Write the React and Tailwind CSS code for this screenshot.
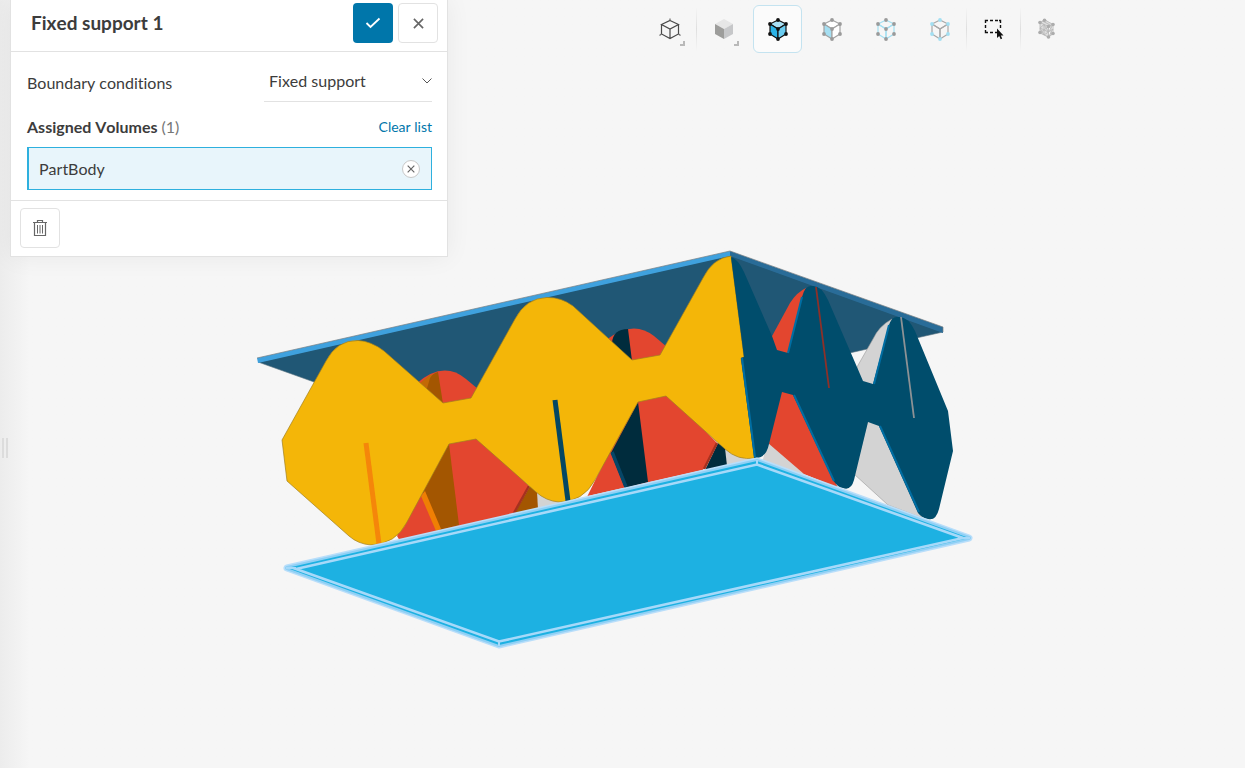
import { useState } from "react";

function Cube({ line, dot, top = "none", left = "none", right = "none", dots = true, center = true }) {
  const points = [
    [12, 3],
    [20, 7],
    [20, 17],
    [12, 22],
    [4, 17],
    [4, 7],
  ];
  return (
    <svg viewBox="0 0 24 24" className="size-6" aria-hidden="true">
      <g stroke={line} strokeWidth="1.2" strokeLinejoin="round">
        <path d="M12 3L20 7L12 12L4 7Z" fill={top} />
        <path d="M4 7L12 12V22L4 17Z" fill={left} />
        <path d="M20 7L12 12V22L20 17Z" fill={right} />
      </g>
      {dots && points.map(([x, y]) => <circle key={`${x}-${y}`} cx={x} cy={y} r="1.9" fill={dot} />)}
      {dots && center && <circle cx="12" cy="12" r="1.9" fill={dot} />}
    </svg>
  );
}

function WireCube() {
  return (
    <svg viewBox="0 0 24 24" className="size-6" fill="none" stroke="#4a4a4a" strokeWidth="1.2" aria-hidden="true">
      <path d="M12 3.500L20.500 7.500L12 12L3.500 7.500ZM3.500 7.500V17L12 21.500L20.500 17V7.500M12 12V21.500" />
      <path d="M12 3.500V1.500M3.500 17L1.500 18.500M20.500 17L22.500 18.500" stroke="#6a6a6a" />
    </svg>
  );
}

function SolidCube() {
  return (
    <svg viewBox="0 0 24 24" className="size-6" aria-hidden="true">
      <path d="M12 2L21 7L12 12L3 7Z" fill="#e6e6e6" />
      <path d="M3 7L12 12V22L3 17Z" fill="#9d9d9b" />
      <path d="M21 7L12 12V22L21 17Z" fill="#c6c7c9" />
    </svg>
  );
}

function BoxSelect() {
  return (
    <svg viewBox="0 0 24 24" className="size-6" aria-hidden="true">
      <path
        d="M3.5 6V3.5H6M8 3.5H11M13 3.5H16M17 3.5H18.5V6M18.5 8V11M3.5 8V11M3.5 13V15.5H6M8 15.5H11M13 15.5H15"
        fill="none"
        stroke="#111"
        strokeWidth="1.4"
      />
      <path d="M15 11.5V21L17.2 19L18.7 22.3L20.2 21.6L18.8 18.4H21.5Z" fill="#111" />
    </svg>
  );
}

function MeshCube() {
  return (
    <svg viewBox="0 0 24 24" className="size-6" aria-hidden="true">
      <path d="M4 5.5L9 3L17 7L12.500 9.5V21L4 16Z" fill="#dedede" />
      <path
        d="M4 5.5L9 3L17 7.5L12.500 9.5ZM4 5.5V16L12.500 20V9.5M12.500 20L17 16.5V7.5M4 11L12.500 15L17 12M8 7.5V18M4 16L12.500 9.5M4 11L8 7.5L12.500 15L8 18L4 11M15 8.5V18.5M12.500 15L17 7.5M12.500 20L17 12M6.500 4L15 8.5"
        fill="none"
        stroke="#b5b5b5"
        strokeWidth="0.8"
      />
      <g fill="#acacac">
        <circle cx="4" cy="5.5" r="1.8" />
        <circle cx="8.500" cy="3.300" r="1.8" />
        <circle cx="17" cy="7.5" r="1.8" />
        <circle cx="12.500" cy="9.5" r="1.8" />
        <circle cx="4" cy="15.500" r="1.8" />
        <circle cx="12.500" cy="20" r="1.8" />
        <circle cx="17" cy="16.500" r="1.8" />
      </g>
    </svg>
  );
}

const toolGroups = [
  [{ id: "wireframe", label: "View cube", icon: <WireCube />, menu: true }],
  [
    { id: "render", label: "Render mode", icon: <SolidCube />, menu: true },
    {
      id: "volumes",
      label: "Select volumes",
      icon: <Cube line="#111" dot="#111" top="#a9e0f5" left="#2cb3e6" right="#6accf0" />,
    },
    {
      id: "faces",
      label: "Select faces",
      icon: <Cube line="#a3a3a3" dot="#9a9a9a" left="#a5dff2" right="#fff" top="#fff" />,
    },
    { id: "nodes", label: "Select nodes", icon: <Cube line="#a2dff2" dot="#9a9a9a" /> },
    { id: "edges", label: "Select edges", icon: <Cube line="#a8a8a8" dot="#a2dff2" center={false} /> },
  ],
  [{ id: "box", label: "Box selection", icon: <BoxSelect /> }],
  [{ id: "mesh", label: "Mesh", icon: <MeshCube /> }],
];

function Toolbar() {
  const [active, setActive] = useState("volumes");

  return (
    <div role="toolbar" aria-label="Viewer" className="flex h-12 items-center">
      {toolGroups.map((group, index) => (
        <div key={index} className="flex h-full items-center">
          {index > 0 && <span className="mx-0.5 h-11 w-px bg-linear-to-b from-transparent via-[#dfdfdf] to-transparent" />}
          <div className="flex h-full gap-[5px]">
            {group.map((tool) => (
              <button
                key={tool.id}
                type="button"
                aria-label={tool.label}
                onClick={() => setActive(tool.id)}
                className={
                  active === tool.id
                    ? "relative flex w-[49px] items-center justify-center rounded-md border border-[#c4e3f0] bg-[#fbfbfb]"
                    : "relative flex w-[49px] items-center justify-center rounded-md border border-transparent"
                }
              >
                {tool.icon}
                {tool.menu && <span className="absolute right-2 bottom-1.5 size-[5px] border-r-2 border-b-2 border-[#b9b9b9]" />}
              </button>
            ))}
          </div>
        </div>
      ))}
    </div>
  );
}

function Model() {
  return (
    <svg
      viewBox="0 0 1245 768"
      className="col-start-1 row-start-1 h-screen w-full"
      role="img"
      aria-label="Sandwich panel model"
    >
      {/* top plate */}
      <path d="M258 362L730 255L943 332L471 438Z" fill="#205775" stroke="#5a7482" strokeWidth="0.6" />
      <path d="M257 358L730 251V256L258 363Z" fill="#3fa1de" />
      <path d="M730 251L943 327V333L730 256Z" fill="#296c98" />
      <path d="M257 358L730 251L943 327V332" fill="none" stroke="#7a7f83" strokeWidth="0.7" />

      {/* grey ribs */}
      <g fill="#d3d3d3">
        <path d="M534 490L562 503L536 510Z" />
        <path d="M722 447L745 459L760 460L722 468Z" />
        <path d="M768 440L806 475L762 463Z" />
        <path d="M857 367L873 339Q879 326 892 319L876 388L860 384Z" stroke="#999" strokeWidth="0.6" />
        <path d="M868 420L881 424L922 518L888 505L854 474Z" stroke="#999" strokeWidth="0.6" />
      </g>

      {/* red ribs */}
      <g fill="#e3462f">
        <path d="M416 384Q443 360 466 379L478 389L468 404L443 408Z" />
        <path d="M606 340Q633 319 654 336L667 347L660 362L632 364Z" />
        <path d="M397 536L447 436L478 434L529 486L514 514L400 541Z" />
        <path d="M587 497L636 397L668 392L717 443L703 470L588 496Z" />
        <path d="M771 338L790 303Q797 292 806 288L792 358L775 352Z" />
        <path d="M781 390L795 393L838 488L804 474L768 443Z" />
      </g>

      {/* shaded cross ribs */}
      <path d="M420 383L430 375L436 374L430 393Z" fill="#c36905" />
      <path d="M426 392L430 378Q433 373 438 372L443 404Z" fill="#a35601" />
      <path d="M449 444L459 525L440 530L423 492L447 441Z" fill="#a35601" />
      <path d="M425 491L441 529L436 531L421 496Z" fill="#ef7f04" />
      <path d="M530 486L537 492L538 509L514 514Z" fill="#a35601" />
      <path d="M529 486L514 513" stroke="#a5311f" strokeWidth="2.5" />
      <path d="M612 343Q613 329 628 329L632 361Z" fill="#002c3d" />
      <path d="M638 402L648 482L625 488L611 453Z" fill="#002c3d" />
      <path d="M612 452L626 487" stroke="#064667" strokeWidth="3.5" />
      <path d="M718 443L725 448L727 466L705 470Z" fill="#002c3d" />
      <path d="M717 443L704 469" stroke="#a5311f" strokeWidth="2.5" />

      {/* front rib */}
      <path
        d="M282 440L326 361Q337 340 358 340.500Q371 341 384 351L443 403L471 398L515 319Q526 298 547 297.500Q561 297 573 306L632 360L660 355L703 278Q713 258 731 256L744 357L741 358L755 458Q738 461 725 449L666 396L638 402L595 480Q583 502 559 502Q546 501 536 492L476 439L449 444L407 522Q396 544 371 545Q358 544 349 536L287 481Z"
        fill="#f4b608"
        stroke="#a08020"
        strokeWidth="0.7"
      />
      <path d="M366 443L379 544" stroke="#f5860a" strokeWidth="5" />
      <path d="M555 400L568 501" stroke="#044763" strokeWidth="5" />

      {/* side rib */}
      <path
        d="M731 257Q738 259 744 272L772 336L777 350L788 353L802 297Q805 285 812 286Q821 285 828 300L863 381L873 384L889 325Q892 316 898 317Q908 316 915 331L948 411L953 451L939 509Q936 521 928 519Q922 518 918 513L879 426L868 422L854 480Q851 491 843 488Q837 487 833 480L793 395L782 392L769 444Q766 459 754 458L741 358L744 357Z"
        fill="#004d6c"
      />
      <g fill="none" stroke="#006ea3" strokeWidth="2">
        <path d="M742 358L755 457" />
        <path d="M788 353L802 297" />
        <path d="M794 395L834 481" />
        <path d="M874 384L889 325" />
        <path d="M880 426L919 512" />
      </g>
      <path d="M816 287L829 388" stroke="#8e3028" strokeWidth="1.8" />
      <path d="M901 317L914 418" stroke="#8d9295" strokeWidth="1.8" />

      {/* selected bottom plate */}
      <path
        d="M287 568L757 461L969 538L499 645Z"
        fill="#1db1e2"
        stroke="#b9defa"
        strokeWidth="7"
        strokeLinejoin="round"
      />
      <path d="M287 568L757 461L969 538L499 645Z" fill="#1db1e2" stroke="#8fd0f5" strokeWidth="4" strokeLinejoin="round" />
      <path d="M287 568L757 461L969 538L499 645Z" fill="#1db1e2" />
      <path d="M296 569L757 464.500L963 538L499 641.500Z" fill="none" stroke="#a6d9f9" strokeWidth="2.6" />
      <path d="M499 641V646M757 460V464M286 568H296M963 538H970" stroke="#a6d9f9" strokeWidth="2" />
    </svg>
  );
}

function Cross({ className }) {
  return (
    <svg viewBox="0 0 12 12" className={className} fill="none" stroke="currentColor" strokeWidth="1.8" aria-hidden="true">
      <path d="M1 1L11 11M11 1L1 11" />
    </svg>
  );
}

function SupportPanel() {
  const [volumes, setVolumes] = useState(["PartBody"]);

  const removeVolume = (name) => {
    setVolumes((prev) => prev.filter((v) => v !== name));
  };

  return (
    <section className="w-[438px] shrink-0 border border-t-0 border-[#e2e2e2] bg-white shadow-[0_0_24px_rgba(0,0,0,0.06)]">
      <header className="flex items-center gap-[5px] border-b border-[#e2e2e2] pt-[3px] pr-[9px] pb-2 pl-5">
        <h1 className="flex-1 text-[19px] font-bold">Fixed support 1</h1>
        <button
          type="button"
          aria-label="Apply"
          className="flex size-10 items-center justify-center rounded bg-[#0076aa] text-white"
        >
          <svg viewBox="0 0 16 12" className="h-3 w-4" fill="none" stroke="currentColor" strokeWidth="1.8" aria-hidden="true">
            <path d="M1.500 6L5.500 10L14.500 1.500" />
          </svg>
        </button>
        <button
          type="button"
          aria-label="Close"
          className="flex size-10 items-center justify-center rounded border border-[#e2e2e2] text-[#666]"
        >
          <Cross className="size-[11px]" />
        </button>
      </header>

      <div className="border-b border-[#e2e2e2] pt-[9px] pr-[15px] pb-[10px] pl-4">
        <div className="flex items-center justify-between">
          <label htmlFor="condition" className="pt-0.5">
            Boundary conditions
          </label>
          <div className="grid w-[168px] items-center border-b border-[#e2e2e2]">
            <select
              id="condition"
              className="col-start-1 row-start-1 h-10 w-full appearance-none bg-transparent px-[5px] outline-none"
            >
              <option>Fixed support</option>
            </select>
            <svg
              viewBox="0 0 10 6"
              className="pointer-events-none col-start-1 row-start-1 h-1.5 w-2.5 justify-self-end"
              fill="none"
              stroke="#555"
              aria-hidden="true"
            >
              <path d="M0.500 0.500L5 5L9.500 0.500" />
            </svg>
          </div>
        </div>

        <div className="flex items-center justify-between pt-[13px] pb-2">
          <h2 className="font-bold">
            Assigned Volumes <span className="font-normal text-[#777]">({volumes.length})</span>
          </h2>
          <button type="button" onClick={() => setVolumes([])} className="text-sm text-[#0076aa]">
            Clear list
          </button>
        </div>

        <ul>
          {volumes.map((name) => (
            <li
              key={name}
              className="flex h-[43px] items-center justify-between border border-l-2 border-[#2eb0de] bg-[#e8f5fb] pr-[11px] pl-[10px]"
            >
              {name}
              <button
                type="button"
                aria-label={`Remove ${name}`}
                onClick={() => removeVolume(name)}
                className="flex size-[18px] items-center justify-center rounded-full border border-[#c8c8c8] bg-white text-[#666]"
              >
                <Cross className="size-2" />
              </button>
            </li>
          ))}
        </ul>
      </div>

      <footer className="px-[9px] pt-[7px] pb-2">
        <button
          type="button"
          aria-label="Delete"
          className="flex size-10 items-center justify-center rounded border border-[#e2e2e2]"
        >
          <svg viewBox="0 0 14 16" className="h-4 w-3.5" fill="none" stroke="#666" aria-hidden="true">
            <path d="M0 2.500H14M4.500 2.500V0.500H9.500V2.500M1.500 2.500V15.500H12.500V2.500" strokeWidth="1.2" />
            <path d="M4.500 5V13.500M7 5V13.500M9.500 5V13.500" />
          </svg>
        </button>
      </footer>
    </section>
  );
}

export default function App() {
  return (
    <main className="grid min-h-screen bg-[#f6f6f6] bg-linear-to-r from-[#ececec] from-0% to-[#f6f6f6] to-[30px] font-['Lato',sans-serif] text-base text-[#3c3c3c] [font-kerning:none] [font-variant-ligatures:none]">
      <Model />
      <div className="col-start-1 row-start-1 flex items-start">
        <div className="flex w-[10px] shrink-0 items-center gap-0.5 self-stretch pt-32 pl-0.5">
          <span className="h-5 w-0.5 bg-[#dcdcdc]" />
          <span className="h-5 w-0.5 bg-[#dcdcdc]" />
        </div>
        <SupportPanel />
        <div className="flex flex-1 justify-center pt-[5px] pl-6">
          <Toolbar />
        </div>
      </div>
    </main>
  );
}
